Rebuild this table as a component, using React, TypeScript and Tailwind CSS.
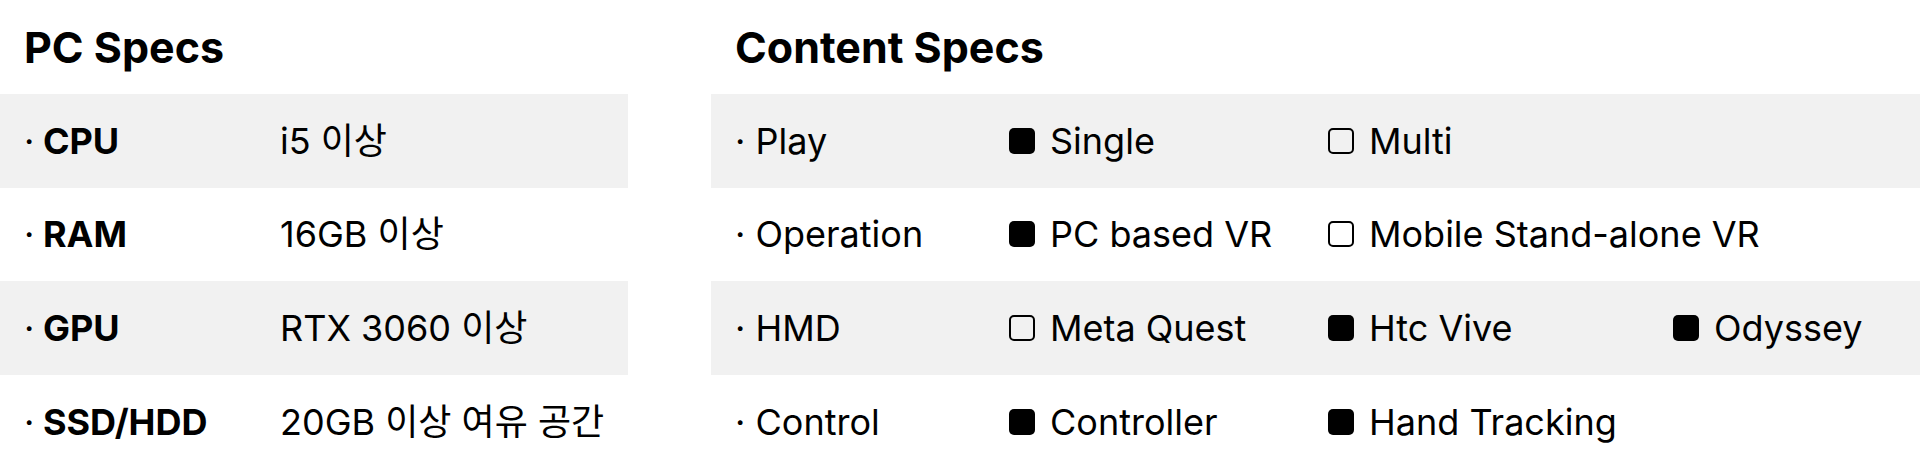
import React from "react";

const FONT = "font-['Inter','Noto_Sans_CJK_KR',sans-serif]";

function Box({ on }: { on: boolean }) {
  return on ? (
    <span className="inline-block w-[26px] h-[26px] rounded-[5px] bg-black shrink-0" />
  ) : (
    <span className="inline-block w-[26px] h-[26px] rounded-[5px] border-2 border-black shrink-0" />
  );
}

function Opt({ on, label, w }: { on: boolean; label: string; w: string }) {
  return (
    <div className={`flex items-center gap-[15px] whitespace-nowrap shrink-0 ${w}`}>
      <Box on={on} />
      <span>{label}</span>
    </div>
  );
}

const pc = [
  { k: "CPU", v: "i5 이상" },
  { k: "RAM", v: "16GB 이상" },
  { k: "GPU", v: "RTX 3060 이상" },
  { k: "SSD/HDD", v: "20GB 이상 여유 공간" },
];

type O = { on: boolean; label: string };
const content: { k: string; opts: O[] }[] = [
  { k: "Play", opts: [{ on: true, label: "Single" }, { on: false, label: "Multi" }] },
  {
    k: "Operation",
    opts: [
      { on: true, label: "PC based VR" },
      { on: false, label: "Mobile Stand-alone VR" },
    ],
  },
  {
    k: "HMD",
    opts: [
      { on: false, label: "Meta Quest" },
      { on: true, label: "Htc Vive" },
      { on: true, label: "Odyssey" },
    ],
  },
  {
    k: "Control",
    opts: [
      { on: true, label: "Controller" },
      { on: true, label: "Hand Tracking" },
    ],
  },
];

export default function App() {
  const widths = ["w-[319px]", "w-[345px]", "w-auto"];
  return (
    <div className={`${FONT} flex h-[469px] w-[1920px] bg-white text-black text-[36px] overflow-hidden`}>
      <div className="w-[628px] shrink-0 grid grid-rows-5 h-full">
        <div className="flex items-center pl-6 text-[43px] font-bold whitespace-nowrap">PC Specs</div>
        {pc.map((r, i) => (
          <div
            key={r.k}
            className={`flex items-center pl-6 whitespace-nowrap ${i % 2 === 0 ? "bg-[#f1f1f1]" : "bg-white"}`}
          >
            <div className="w-[256px] shrink-0 font-bold">
              <span className="font-normal">·</span> {r.k}
            </div>
            <div>{r.v}</div>
          </div>
        ))}
      </div>
      <div className="ml-[83px] flex-1 grid grid-rows-5 h-full">
        <div className="flex items-center pl-6 text-[43px] font-bold whitespace-nowrap">Content Specs</div>
        {content.map((r, i) => (
          <div
            key={r.k}
            className={`flex items-center pl-6 whitespace-nowrap ${i % 2 === 0 ? "bg-[#f1f1f1]" : "bg-white"}`}
          >
            <div className="w-[274px] shrink-0">· {r.k}</div>
            {r.opts.map((o, j) => (
              <Opt key={o.label} on={o.on} label={o.label} w={widths[j]} />
            ))}
          </div>
        ))}
      </div>
    </div>
  );
}
